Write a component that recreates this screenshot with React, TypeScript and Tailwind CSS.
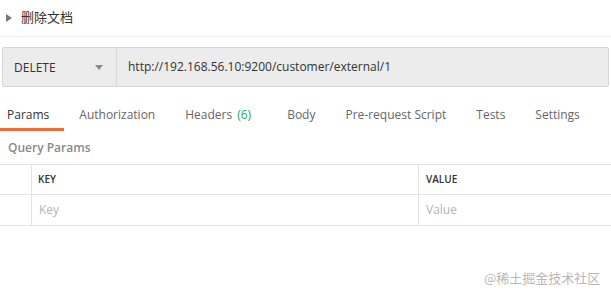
import React from "react";

const font = { fontFamily: '"Open Sans", "Noto Sans CJK SC", sans-serif' };

export default function App() {
  const tabs = [
    { label: "Params", active: true },
    { label: "Authorization" },
    { label: "Headers", count: "(6)" },
    { label: "Body" },
    { label: "Pre-request Script" },
    { label: "Tests" },
    { label: "Settings" },
  ];
  return (
    <div className="relative w-[611px] h-[296px] bg-white overflow-hidden text-[#505050]" style={font}>
      <div className="h-[37px] flex items-center border-b border-[#ececec]">
        <svg width="6" height="8" viewBox="0 0 6 8" className="ml-[6px] mr-[9px]">
          <path d="M0 0 L6 4 L0 8 Z" fill="#777" />
        </svg>
        <span className="text-[13px] text-[#333] -mt-[2px]" style={{ fontFamily: '"Noto Sans CJK SC", sans-serif' }}>删除文档</span>
      </div>
      <div className="mt-[10px] mx-[2px] h-[40px] flex border border-[#d6d6d6] bg-[#ececec] rounded-[2px]">
        <div className="w-[114px] flex items-center justify-between pl-[11px] pr-[13px] border-r border-[#d6d6d6]">
          <span className="text-[12px] text-[#333] mt-[2px]">DELETE</span>
          <svg width="8" height="5" viewBox="0 0 8 5" className="mt-[1px]">
            <path d="M0 0 L8 0 L4 5 Z" fill="#888" />
          </svg>
        </div>
        <div className="flex items-center pl-[11px] text-[12px] text-[#333]">
          http://192.168.56.10:9200/customer/external/1
        </div>
      </div>
      <div className="mt-[13px] flex h-[31px] gap-[16px]">
        {tabs.map((t) => (
          <div
            key={t.label}
            className={`relative px-[7px] flex items-start pt-[6px] text-[12px] ${t.active ? "text-[#333]" : "text-[#666]"} ${t.count ? "pr-[13px]" : ""}`}
          >
            {t.label}
            {t.count && <span className="ml-[5px] text-[#26a65b]">{t.count}</span>}
            {t.active && <span className="absolute left-0 bottom-0 h-[3px] w-[64px] bg-[#f26b3a]" />}
          </div>
        ))}
      </div>
      <div className="h-[33px] flex items-center pt-[1px] pl-[8px] text-[12px] font-semibold text-[#8a8a8a]">Query Params</div>
      <div className="border-t border-[#e4e4e4]">
        <div className="flex h-[30px] border-b border-[#e4e4e4]">
          <div className="w-[32px] border-r border-[#e4e4e4]" />
          <div className="w-[387px] border-r border-[#e4e4e4] flex items-center pl-[6px] text-[10px] font-semibold text-[#333]">KEY</div>
          <div className="flex-1 flex items-center pl-[7px] text-[10px] font-semibold text-[#333]">VALUE</div>
        </div>
        <div className="flex h-[31px] border-b border-[#e4e4e4]">
          <div className="w-[32px] border-r border-[#e4e4e4]" />
          <div className="w-[387px] border-r border-[#e4e4e4] flex items-center pl-[7px] text-[12px] text-[#b5b5b5]">Key</div>
          <div className="flex-1 flex items-center pl-[7px] text-[12px] text-[#b5b5b5]">Value</div>
        </div>
      </div>
      <div className="absolute left-[484px] top-[268px] text-[13px] text-[#b8b8b8]" style={{ fontFamily: '"Noto Sans CJK SC", sans-serif' }}>
        @稀土掘金技术社区
      </div>
    </div>
  );
}
